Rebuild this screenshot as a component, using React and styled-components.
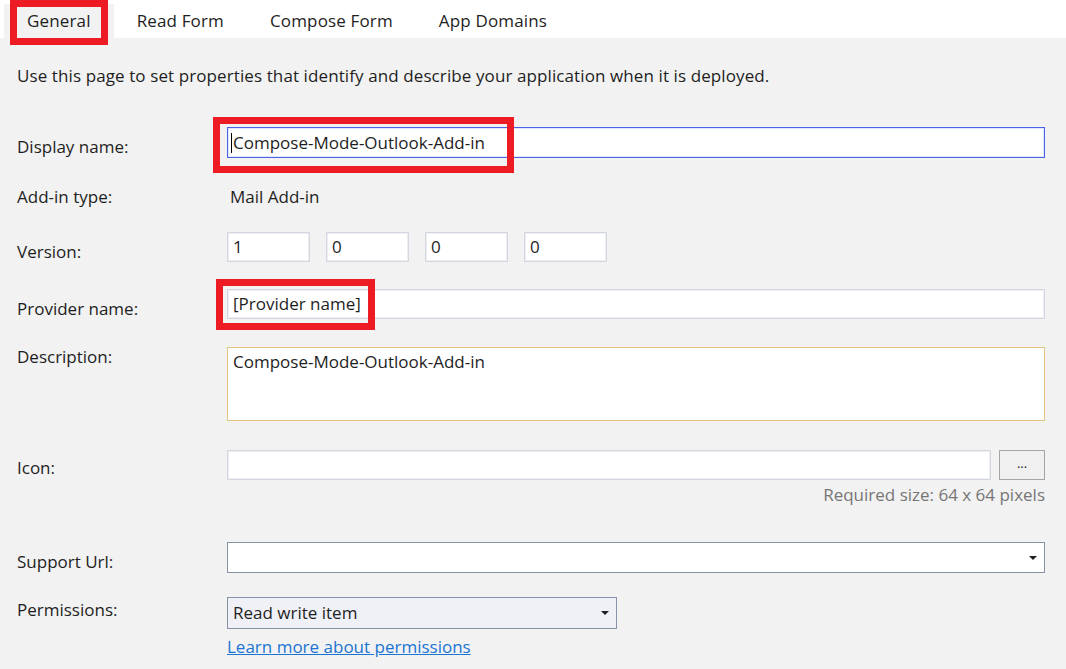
import styled, { createGlobalStyle } from "styled-components";

const GlobalStyle = createGlobalStyle`
  body {
    margin: 0;
    background: #f2f2f2;
    font-family: "Segoe UI", "Open Sans", sans-serif;
    color: #1e1e1e;
  }
`;

const Page = styled.div`
  width: 1066px;
  height: 669px;
  overflow: hidden;
  background: #f2f2f2;
  font-size: 17px;
`;

const TabBar = styled.div`
  height: 38px;
  background: #fff;
  display: flex;
  align-items: flex-end;
  padding-left: 4px;
  position: relative;
  z-index: 2;
`;

const Tab = styled.div`
  position: relative;
  height: 33px;
  padding: 0 23px 1px 23px;
  display: flex;
  align-items: center;
  background: ${(p) => (p.$active ? "#f2f2f2" : "transparent")};
  white-space: nowrap;
  letter-spacing: 0.15px;
`;

const Callout = styled.div`
  position: absolute;
  left: ${(p) => p.$left}px;
  top: ${(p) => p.$top}px;
  width: ${(p) => p.$w}px;
  height: ${(p) => p.$h}px;
  border: 7px solid #ed1c24;
  box-sizing: border-box;
  pointer-events: none;
  z-index: 3;
`;

const Body = styled.div`
  padding: 28px 21px 0 17px;
`;

const Intro = styled.p`
  margin: 0;
  line-height: 20px;
  white-space: nowrap;
  letter-spacing: 0.1px;
`;

const Row = styled.div`
  display: grid;
  grid-template-columns: 210px 1fr;
  margin-top: ${(p) => p.$gap}px;
`;

const Label = styled.div`
  line-height: 20px;
  padding-top: ${(p) => p.$offset || 0}px;
  white-space: nowrap;
`;

const Field = styled.div`
  position: relative;
`;

const Value = styled.div`
  line-height: 20px;
  padding-left: 3px;
`;

const TextBox = styled.div`
  box-sizing: border-box;
  height: ${(p) => p.$h || 30}px;
  width: ${(p) => (p.$w ? `${p.$w}px` : "100%")};
  background: #fff;
  border: 1px solid ${(p) => p.$border || "#d4d7df"};
  box-shadow: inset 0 0 0 1px ${(p) => p.$inner || "#eceef3"};
  padding: ${(p) => (p.$multi ? "4px 5px" : "0 5px")};
  display: flex;
  align-items: ${(p) => (p.$multi ? "flex-start" : "center")};
  line-height: 20px;
  white-space: nowrap;
  flex: ${(p) => (p.$grow ? 1 : "none")};
`;

const Caret = styled.span`
  display: inline-block;
  width: 1px;
  height: 20px;
  background: #000;
  margin-right: 1px;
`;

const VersionGroup = styled.div`
  display: flex;
  gap: 16px;
`;

const IconLine = styled.div`
  display: flex;
  gap: 8px;
`;

const BrowseButton = styled.div`
  box-sizing: border-box;
  width: 46px;
  height: 30px;
  border: 1px solid #a5a5a5;
  background: #f0f0f0;
  display: flex;
  align-items: center;
  justify-content: center;
  font-size: 13px;
  padding-bottom: 4px;
`;

const Hint = styled.div`
  text-align: right;
  color: #767676;
  line-height: 20px;
  margin-top: 5px;
`;

const Combo = styled.div`
  box-sizing: border-box;
  width: ${(p) => (p.$w ? `${p.$w}px` : "100%")};
  height: ${(p) => p.$h}px;
  background: ${(p) => p.$bg || "#fff"};
  border: 1px solid #8792a6;
  box-shadow: inset 0 0 0 1px ${(p) => p.$bg || "#fff"};
  display: flex;
  align-items: center;
  justify-content: space-between;
  padding: 0 6px 0 5px;
  line-height: 20px;
`;

const Arrow = styled.span`
  width: 0;
  height: 0;
  border-left: 4px solid transparent;
  border-right: 4px solid transparent;
  border-top: 4px solid #1e1e1e;
  margin-right: 1px;
`;

const LinkText = styled.a`
  display: inline-block;
  margin-top: 8px;
  color: #1a74d2;
  text-decoration: underline;
  line-height: 20px;
  cursor: pointer;
`;

const tabs = ["General", "Read Form", "Compose Form", "App Domains"];

export default function App() {
  return (
    <Page>
      <GlobalStyle />
      <TabBar>
        {tabs.map((t, i) => (
          <Tab key={t} $active={i === 0}>
            {t}
            {i === 0 && <Callout $left={6} $top={-4} $w={98} $h={45} />}
          </Tab>
        ))}
      </TabBar>
      <Body>
        <Intro>
          Use this page to set properties that identify and describe your application when it is deployed.
        </Intro>

        <Row $gap={41}>
          <Label $offset={10}>Display name:</Label>
          <Field>
            <TextBox $h={31} $border="#4a63e6" $inner="#dfe6fd" style={{ paddingLeft: 3 }}>
              <Caret />
              Compose-Mode-Outlook-Add-in
            </TextBox>
            <Callout $left={-14} $top={-10} $w={301} $h={56} />
          </Field>
        </Row>

        <Row $gap={29}>
          <Label>Add-in type:</Label>
          <Value>Mail Add-in</Value>
        </Row>

        <Row $gap={25}>
          <Label $offset={10}>Version:</Label>
          <VersionGroup>
            {["1", "0", "0", "0"].map((v, i) => (
              <TextBox key={i} $w={83}>
                {v}
              </TextBox>
            ))}
          </VersionGroup>
        </Row>

        <Row $gap={27}>
          <Label $offset={10}>Provider name:</Label>
          <Field>
            <TextBox>[Provider name]</TextBox>
            <Callout $left={-11} $top={-10} $w={159} $h={51} />
          </Field>
        </Row>

        <Row $gap={28}>
          <Label $offset={0}>Description:</Label>
          <TextBox $h={74} $multi $border="#e3c47a" $inner="#fff">
            Compose-Mode-Outlook-Add-in
          </TextBox>
        </Row>

        <Row $gap={29}>
          <Label $offset={8}>Icon:</Label>
          <div>
            <IconLine>
              <TextBox $grow />
              <BrowseButton>...</BrowseButton>
            </IconLine>
            <Hint>Required size: 64 x 64 pixels</Hint>
          </div>
        </Row>

        <Row $gap={37}>
          <Label $offset={10}>Support Url:</Label>
          <Combo $h={31}>
            <span />
            <Arrow />
          </Combo>
        </Row>

        <Row $gap={24}>
          <Label $offset={3}>Permissions:</Label>
          <div>
            <Combo $h={32} $w={390} $bg="#f0f1f6">
              <span>Read write item</span>
              <Arrow />
            </Combo>
            <LinkText>Learn more about permissions</LinkText>
          </div>
        </Row>
      </Body>
    </Page>
  );
}
